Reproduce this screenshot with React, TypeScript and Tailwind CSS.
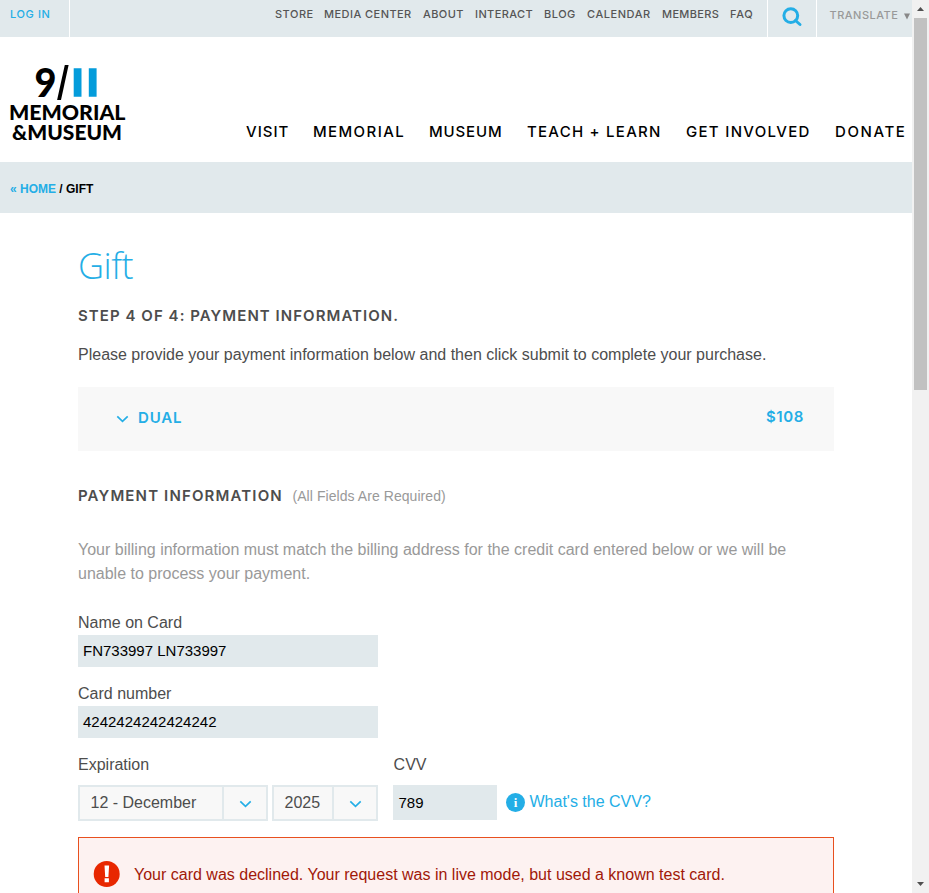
import type { ReactNode } from "react";

const display = "font-['Inter','Liberation_Sans',sans-serif]";

const utilityLinks = [
  { label: "STORE", style: "w-[49px] tracking-[0.5px]" },
  { label: "MEDIA CENTER", style: "w-[99px] tracking-[0.45px]" },
  { label: "ABOUT", style: "w-[52px] tracking-[0.4px]" },
  { label: "INTERACT", style: "w-[69px] tracking-[0.4px]" },
  { label: "BLOG", style: "w-[43px] tracking-[0.5px]" },
  { label: "CALENDAR", style: "w-[75px] tracking-[0.55px]" },
  { label: "MEMBERS", style: "w-[68px] tracking-[0.35px]" },
  { label: "FAQ", style: "w-[37px] tracking-[0.7px]" },
];

const mainLinks = [
  { label: "VISIT", style: "w-[67px] tracking-[1px]" },
  { label: "MEMORIAL", style: "w-[116px] tracking-[1.4px]" },
  { label: "MUSEUM", style: "w-[98px] tracking-[0.85px]" },
  { label: "TEACH + LEARN", style: "w-[159px] tracking-[1.25px]" },
  { label: "GET INVOLVED", style: "w-[149px] tracking-[1.3px]" },
  { label: "DONATE", style: "w-[77px] tracking-[1.6px]" },
];

function Chevron() {
  return (
    <svg width="13" height="8" viewBox="0 0 13 8" fill="none" stroke="#24aee6" strokeWidth="1.7">
      <path d="M1.3 1.4 6.5 6.3 11.7 1.4" />
    </svg>
  );
}

function Logo() {
  return (
    <svg width="117" height="76" viewBox="0 0 117 76" className="block overflow-visible font-['Lato','Liberation_Sans',sans-serif] font-black">
      <text x="25.5" y="32" fontSize="39" textLength="22" lengthAdjust="spacingAndGlyphs">9</text>
      <path d="M55.8 0h3.8L52 35h-3.9z" />
      <path d="M64.7 3.3h7.8v28.5h-7.8zM79.8 3.3h7.8v28.5h-7.8z" fill="#049cdb" />
      <text x="0" y="54.5" fontSize="20.5" textLength="116.5" lengthAdjust="spacingAndGlyphs">MEMORIAL</text>
      <text x="3" y="74.5" fontSize="20.5" textLength="110" lengthAdjust="spacingAndGlyphs">&amp;MUSEUM</text>
    </svg>
  );
}

function Field({ label, value, className }: { label: string; value: string; className?: string }) {
  return (
    <label className={`block ${className ?? ""}`}>
      <span className="block h-6 leading-6">{label}</span>
      <span className="flex h-8 w-[300px] items-center bg-[#e1e9ec] px-[5px] pt-px text-[15px] text-black">{value}</span>
    </label>
  );
}

function Select({ children, className }: { children: ReactNode; className: string }) {
  return (
    <div className={`flex h-9 border-2 border-[#e1e9ec] bg-[#f8f8f8] ${className}`}>
      <span className="flex-1 pl-[10.5px] leading-[31px] whitespace-nowrap">{children}</span>
      <span className="flex w-[44px] items-center justify-center border-l-2 border-[#e1e9ec] pt-px">
        <Chevron />
      </span>
    </div>
  );
}

function Scrollbar() {
  return (
    <div className="flex h-full w-[17px] flex-col items-center bg-[#f1f1f1]">
      <svg width="17" height="18" viewBox="0 0 17 18"><path d="M5 11 8.5 7 12 11z" fill="#505050" /></svg>
      <div className="h-[372px] w-[13px] bg-[#c1c1c1]" />
      <svg className="mt-auto" width="17" height="17" viewBox="0 0 17 17"><path d="M5 6h7L8.5 10z" fill="#505050" /></svg>
    </div>
  );
}

export default function App() {
  return (
    <div className="flex h-[893px] w-[929px] overflow-hidden bg-white font-['Liberation_Sans',Arial,sans-serif] text-base text-[#4d4d4d]">
      <div className="h-full w-[912px] overflow-hidden">
        <div className={`flex h-[37px] bg-[#e1e9ec] text-[11px] font-medium whitespace-nowrap ${display}`}>
          <div className="w-[70px] shrink-0 border-r border-white pl-[10px] leading-[28px] tracking-[0.6px] text-[#24aee6]">LOG IN</div>
          <nav className="ml-auto flex shrink-0 leading-[28px] text-[#555]">
            {utilityLinks.map((l) => (
              <a key={l.label} className={`shrink-0 ${l.style}`}>{l.label}</a>
            ))}
          </nav>
          <div className="w-[49px] shrink-0 border-l border-white pt-[7px] pl-[14px]">
            <svg width="21" height="21" viewBox="0 0 21 21" fill="none" stroke="#24aee6" strokeWidth="3">
              <circle cx="8.8" cy="8.6" r="6.9" />
              <path d="m13.5 13.5 4.5 4" strokeLinecap="round" />
            </svg>
          </div>
          <div className="flex w-[96px] shrink-0 border-l border-white pl-[12.5px] leading-[30px] text-[#999]">
            <span className="w-[73.5px] tracking-[0.5px]">TRANSLATE</span>
            <svg className="mt-[12.5px]" width="8" height="7" viewBox="0 0 8 7"><path d="M1 .5h6L4 6.5z" fill="#888" /></svg>
          </div>
        </div>

        <header className="flex h-[125px]">
          <div className="shrink-0 pt-[28px] pl-[9px]"><Logo /></div>
          <nav className={`mt-[84px] ml-auto flex shrink-0 text-[15px] leading-[22px] font-medium whitespace-nowrap text-black ${display}`}>
            {mainLinks.map((l) => (
              <a key={l.label} className={`shrink-0 ${l.style}`}>{l.label}</a>
            ))}
          </nav>
        </header>

        <div className="h-[51px] bg-[#e1e9ec] pl-[10px] text-xs leading-[54px] font-bold text-black">
          <span className="text-[#24aee6]">« HOME</span> / GIFT
        </div>

        <main className="w-[834px] pl-[78px]">
          <h1 className="h-[91px] pt-[29px] font-['Open_Sans',sans-serif] text-[36px] leading-[48px] font-light tracking-[-0.5px] text-[#24aee6]">Gift</h1>
          <h2 className={`h-[24px] text-[15px] leading-[24px] font-semibold tracking-[1.05px] whitespace-nowrap ${display}`}>STEP 4 OF 4: PAYMENT INFORMATION.</h2>
          <p className="mt-[15px] h-[44px] leading-6">Please provide your payment information below and then click submit to complete your purchase.</p>

          <div className={`flex h-16 items-center bg-[#f8f8f8] pr-[30px] pb-[3px] pl-[38px] text-[15px] font-semibold text-[#24aee6] ${display}`}>
            <span className="flex pt-[2px]"><Chevron /></span>
            <span className="ml-[9px] pt-[2px] tracking-[0.8px]">DUAL</span>
            <span className="ml-auto tracking-[0.6px]">$108</span>
          </div>

          <div className="mt-[33px] flex h-6 items-center">
            <h2 className={`w-[214.5px] text-[15px] leading-6 font-semibold tracking-[1.15px] whitespace-nowrap ${display}`}>PAYMENT INFORMATION</h2>
            <span className="text-sm tracking-[0.06px] text-[#999]">(All Fields Are Required)</span>
          </div>
          <p className="mt-[30px] leading-6 text-[#999]">
            Your billing information must match the billing address for the credit card entered below or we will be unable to process your payment.
          </p>

          <Field className="mt-[25px]" label="Name on Card" value="FN733997 LN733997" />
          <Field className="mt-[15px]" label="Card number" value="4242424242424242" />

          <div className="mt-[15px] flex">
            <div className="w-[315px]">
              <div className="leading-6">Expiration</div>
              <div className="mt-[8px] flex gap-1">
                <Select className="w-[190px]">12 - December</Select>
                <Select className="w-[106px]">2025</Select>
              </div>
            </div>
            <div>
              <div className="pl-[0.6px] leading-6">CVV</div>
              <div className="mt-[8px] flex">
                <span className="h-[35px] w-[104px] bg-[#e1e9ec] pl-[5.5px] text-[15px] leading-[36px] text-black">789</span>
                <span className="mt-[8px] ml-[9px] flex size-[19px] items-center justify-center rounded-full bg-[#24aee6] font-['Liberation_Serif',serif] text-[13px] font-bold text-white">i</span>
                <a className="ml-[4.5px] leading-[33px] text-[#24aee6]">What's the CVV?</a>
              </div>
            </div>
          </div>

          <div className="mt-4 flex h-[80px] border border-[#e8501f] bg-[#fdf2f1] pl-[14px] text-[#a11808]">
            <svg className="mt-[22px] shrink-0" width="28" height="28" viewBox="0 0 28 28">
              <circle cx="13.7" cy="14" r="13" fill="#e82700" />
              <path d="M11.5 5.5h4.6l-.7 11.5h-3.2zM11.6 18.3h4.3v3.9h-4.3z" fill="#fff" />
            </svg>
            <span className="ml-[13px] pt-[25px] leading-6 whitespace-nowrap">Your card was declined. Your request was in live mode, but used a known test card.</span>
          </div>
        </main>
      </div>
      <Scrollbar />
    </div>
  );
}
